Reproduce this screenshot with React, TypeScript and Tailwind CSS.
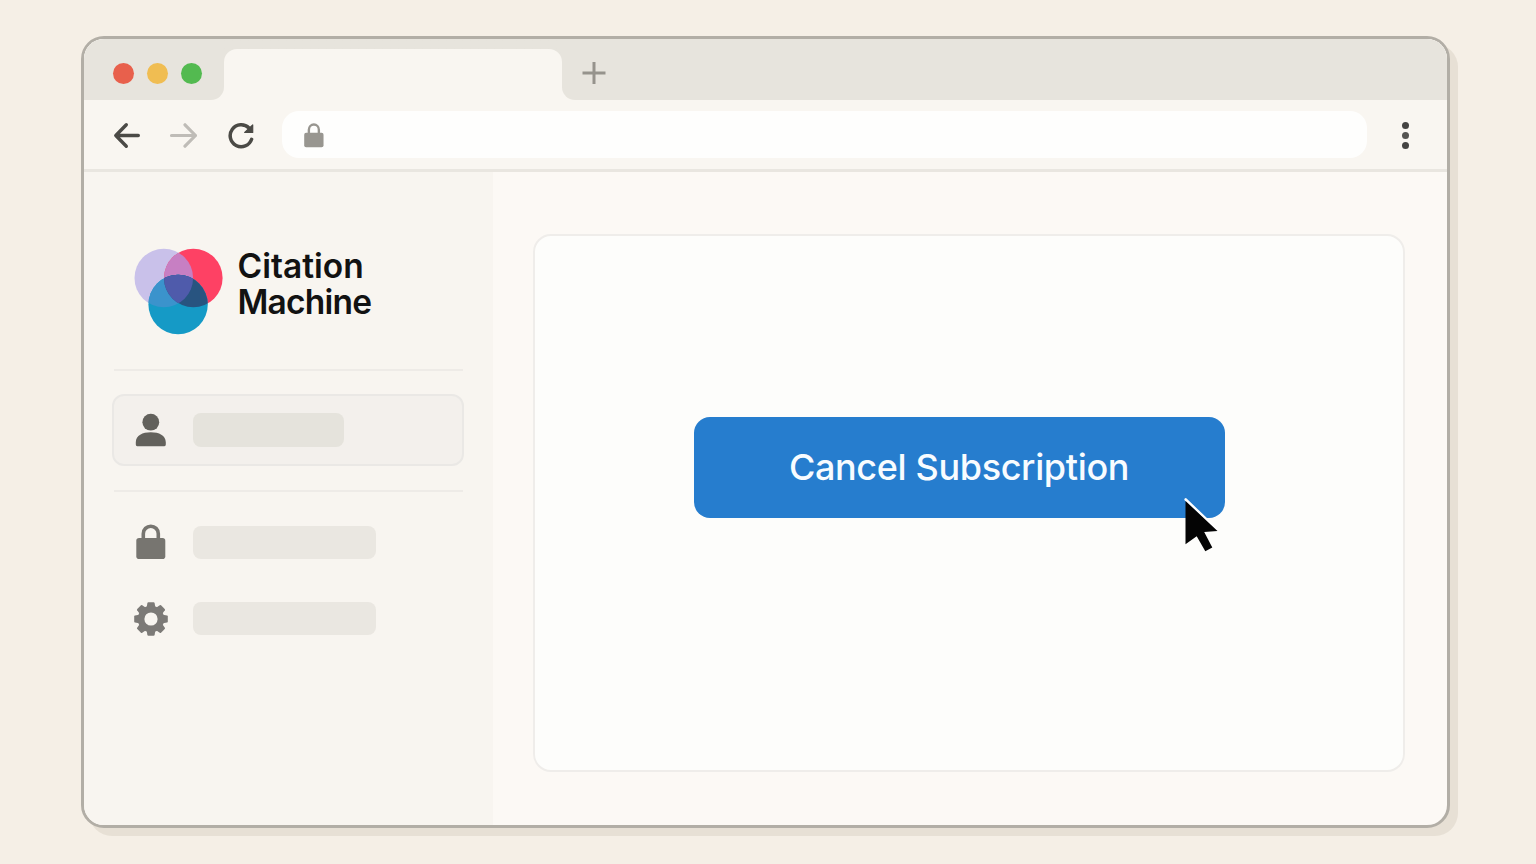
import React from 'react';

const LockIcon: React.FC<{ className?: string }> = ({ className }) => (
    <svg viewBox="0 0 30 36" preserveAspectRatio="none" className={className} fill="none">
        <path d="M7.300 16V9.700a7.500 7.500 0 0 1 15 0V16" stroke="currentColor" strokeWidth="3.600" />
        <rect x="0.3" y="14" width="29" height="21" rx="2.8" fill="currentColor" />
    </svg>
);

const UserIcon = () => (
    <svg viewBox="0 0 34 36" className="w-[34px] h-9 text-[#62615c]" fill="currentColor">
        <circle cx="16.8" cy="10.200" r="8.4" />
        <path d="M1.800 32.500v-2.300C2 23.500 8.500 20.300 16.800 20.300s14.800 3.200 15 9.900v2.300q0 1.800-1.400 1.800H3.200q-1.400 0-1.400-1.800z" />
    </svg>
);

const GearIcon = () => (
    <svg viewBox="-17 -17 34 34" className="mt-px size-[34px] text-[#7c7a77]">
        <mask id="gear-hole">
            <rect x="-17" y="-17" width="34" height="34" fill="#fff" />
            <circle r="6.6" fill="#000" />
        </mask>
        <g mask="url(#gear-hole)" fill="currentColor">
            <circle r="13.200" />
            {[0, 45, 90, 135].map((angle) => (
                <path
                    key={angle}
                    transform={`rotate(${angle})`}
                    d="M-4.300-12L-3.600-16q.2-.8 1-.8h5.200q.8 0 1 .8L4.300-12v24L3.600 16q-.2.8-1 .8h-5.200q-.8 0-1-.8L-4.300 12z"
                />
            ))}
        </g>
    </svg>
);

const Logo = () => (
    <svg viewBox="0 0 90 88" className="mt-px w-[90px] h-[88px] shrink-0">
        <defs>
            <clipPath id="logo-lilac">
                <circle cx="29.800" cy="30" r="29.300" />
            </clipPath>
            <clipPath id="logo-red">
                <circle cx="59.300" cy="30" r="29.300" />
            </clipPath>
        </defs>
        <circle cx="29.800" cy="30" r="29.300" fill="#c9c1ea" />
        <circle cx="59.300" cy="30" r="29.300" fill="#fe4164" />
        <circle cx="59.300" cy="30" r="29.300" fill="#c77fc3" clipPath="url(#logo-lilac)" />
        <circle cx="44.100" cy="56.500" r="29.700" fill="#159ac6" />
        <circle cx="44.100" cy="56.500" r="29.700" fill="#3b93cc" clipPath="url(#logo-lilac)" />
        <circle cx="44.100" cy="56.500" r="29.700" fill="#285480" clipPath="url(#logo-red)" />
        <g clipPath="url(#logo-lilac)">
            <circle cx="44.100" cy="56.500" r="29.700" fill="#4f5bab" clipPath="url(#logo-red)" />
        </g>
    </svg>
);

const TabBar = () => (
    <div className="flex h-[61px] shrink-0 bg-[#f9f6f1]">
        <div className="flex w-[140px] items-center gap-[13px] rounded-br-[13px] bg-[#e7e4dd] pt-2 pl-[29px]">
            <span className="size-[21px] rounded-full bg-[#e8604c]" />
            <span className="size-[21px] rounded-full bg-[#f0bd52]" />
            <span className="size-[21px] rounded-full bg-[#53ba50]" />
        </div>
        <div className="w-[338px] bg-linear-to-b from-[#e7e4dd] from-50% to-[#f9f6f1] to-50% pt-2.5">
            <div className="h-full rounded-t-[13px] bg-[#f9f6f1]" />
        </div>
        <div className="flex flex-1 items-center rounded-bl-[13px] bg-[#e7e4dd] pt-1.5 pl-5">
            <svg viewBox="0 0 24 24" className="size-6" stroke="#96938c" strokeWidth="3">
                <path d="M.5 12h23M12 1v22" />
            </svg>
        </div>
    </div>
);

const Toolbar = () => (
    <div className="flex h-[72px] shrink-0 items-center border-b-[3px] border-[#e9e6e0] bg-[#f9f6f1] pl-[29px]">
        <svg viewBox="0 0 28 28" className="size-7" fill="none" stroke="#4b4a46" strokeWidth="3.400" strokeLinecap="round" strokeLinejoin="round">
            <path d="M25.300 14.500H3M13.300 3.800L2.800 14.500l10.500 10.700" />
        </svg>
        <svg viewBox="0 0 28 28" className="ml-7 size-7" fill="none" stroke="#bfbcb7" strokeWidth="3.200" strokeLinecap="round" strokeLinejoin="round">
            <path d="M2.500 14.500H26M16 3.800L26.500 14.500 16 25.200" />
        </svg>
        <svg viewBox="0 0 28 28" className="ml-[30px] size-7" fill="none" stroke="#4b4a46" strokeWidth="3.500" strokeLinecap="round">
            <path d="M24.600 18.300A11 11 0 1 1 22 7" />
            <path d="M25.700 4v7.500h-8z" fill="#4b4a46" strokeWidth="1.200" strokeLinejoin="round" />
        </svg>
        <div className="ml-[27px] flex h-[47px] w-[1085px] items-center rounded-[17px] bg-[#fefefd] pl-[21.500px]">
            <LockIcon className="mt-px h-[25px] w-5 text-[#989690]" />
        </div>
        <div className="ml-[34.500px] flex flex-col gap-[3px] pt-0.5">
            <span className="size-[7px] rounded-full bg-[#454442]" />
            <span className="size-[7px] rounded-full bg-[#555451]" />
            <span className="size-[7px] rounded-full bg-[#454442]" />
        </div>
    </div>
);

const Sidebar = () => (
    <aside className="w-[409px] shrink-0 bg-[#f8f5f0] pt-[75px] pl-7">
        <div className="flex h-[88px] pl-[22px]">
            <Logo />
            <h1 className="ml-[13.500px] pt-px text-[33.500px] leading-9 font-semibold text-[#121212]">
                Citation
                <br />
                <span className="tracking-[-0.8px]">Machine</span>
            </h1>
        </div>
        <div className="mt-[34px] ml-0.5 h-0.5 w-[349px] bg-[#eeebe7]" />
        <div className="mt-[23px] flex h-[72px] w-[352px] items-center rounded-xl border-2 border-[#eae8e5] bg-[#f3f0ec] pl-5">
            <UserIcon />
            <div className="ml-[25px] h-[34px] w-[151px] rounded-lg bg-[#e5e3dc]" />
        </div>
        <div className="mt-6 ml-0.5 h-0.5 w-[349px] bg-[#eeebe7]" />
        <nav className="flex flex-col gap-10 pt-8 pl-[22px]">
            <div className="flex h-9 items-center">
                <LockIcon className="ml-0.5 h-9 w-[30px] text-[#777570]" />
                <div className="ml-[27px] h-[33px] w-[183px] rounded-lg bg-[#eae7e1]" />
            </div>
            <div className="flex h-9 items-center">
                <GearIcon />
                <div className="ml-[25px] h-[33px] w-[183px] rounded-lg bg-[#eae7e1]" />
            </div>
        </nav>
    </aside>
);

const App: React.FC = () => {
    return (
        <div className="h-[864px] w-[1536px] overflow-hidden bg-[#f5efe6] pt-9 pl-[81px] font-['Inter',sans-serif]">
            <div className="flex h-[792px] w-[1369px] flex-col overflow-hidden rounded-[23px] border-[3px] border-[#b2aea6] bg-[#fcf9f5] shadow-[8px_8px_0_#e7e0d5]">
                <TabBar />
                <Toolbar />
                <div className="flex flex-1">
                    <Sidebar />
                    <main className="flex-1 pt-[62px] pl-10">
                        <div className="flex h-[538px] w-[872px] justify-center rounded-[18px] border-2 border-[#efedea] bg-[#fdfdfb] pt-[181px]">
                            <button className="relative mr-5 h-[101px] w-[531px] rounded-2xl bg-[#267dce] pb-0.5 text-[36px] font-medium tracking-[-0.35px] text-[#f8fcff]">
                                Cancel Subscription
                                {/* mouse pointer */}
                                <svg viewBox="0 0 40 60" className="absolute top-[77px] left-[487px] h-[60px] w-10">
                                    <path d="M4.700 5.500L35.500 35" stroke="#fff" strokeWidth="2.600" strokeLinecap="round" />
                                    <path d="M4.500 7L36.500 37 23.200 38 31.300 53.600 24.300 57.200 15.700 42.200 4.500 50.200z" fill="#040404" />
                                </svg>
                            </button>
                        </div>
                    </main>
                </div>
            </div>
        </div>
    );
};

export default App;
